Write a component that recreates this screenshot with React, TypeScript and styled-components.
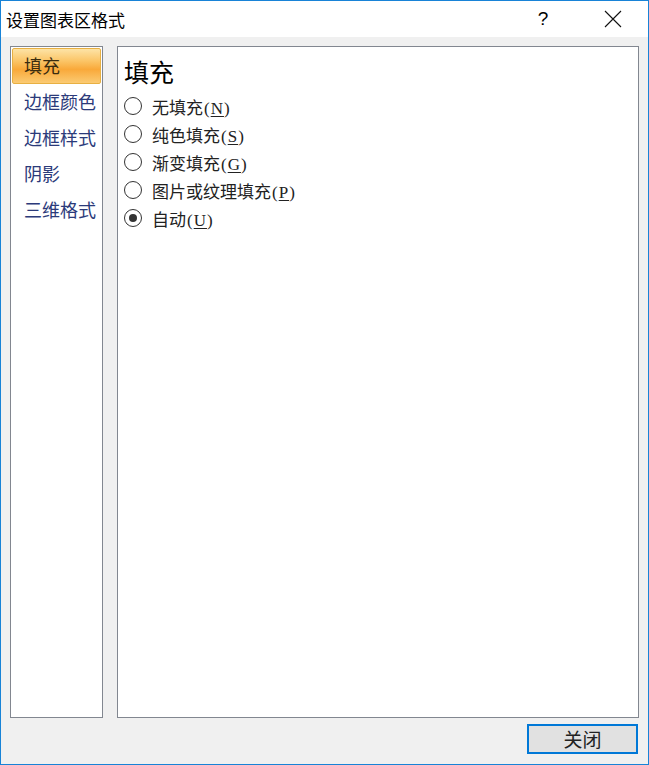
import React, { useState } from 'react';
import styled, { createGlobalStyle } from 'styled-components';

const GlobalStyle = createGlobalStyle`
  html, body {
    margin: 0;
    padding: 0;
    background: #f0f0f0;
  }
  body {
    font-family: "Noto Sans CJK SC", sans-serif;
  }
`;

const Window = styled.div`
  width: 649px;
  height: 765px;
  box-sizing: border-box;
  border: 1px solid #1883d7;
  display: flex;
  flex-direction: column;
  background: #f0f0f0;
`;

const TitleBar = styled.div`
  height: 36px;
  background: #fff;
  display: flex;
  align-items: center;
  padding-left: 5px;
  flex: 0 0 auto;
`;

const TitleText = styled.div`
  flex: 1;
  font-size: 17px;
  color: #000;
  font-family: "Noto Sans CJK SC", sans-serif;
`;

const TitleButton = styled.div`
  width: 70px;
  height: 36px;
  display: flex;
  align-items: center;
  justify-content: center;
  color: #000;
  font-family: "Liberation Sans", sans-serif;
  font-size: 19px;
  font-weight: 300;
`;

const Body = styled.div`
  flex: 1;
  display: flex;
  flex-direction: column;
  padding: 9px 9px 0 9px;
`;

const Panels = styled.div`
  display: flex;
  gap: 14px;
  height: 672px;
`;

const Nav = styled.div`
  width: 93px;
  box-sizing: border-box;
  border: 1px solid #828790;
  background: #fff;
  padding: 1px;
  display: flex;
  flex-direction: column;
`;

const NavItem = styled.div<{ $active?: boolean }>`
  height: 36px;
  box-sizing: border-box;
  display: flex;
  align-items: center;
  padding-left: 11px;
  padding-bottom: 2px;
  font-size: 18px;
  font-family: "Noto Sans CJK SC", sans-serif;
  color: ${p => (p.$active ? '#3a2c10' : '#2b3a7a')};
  border-radius: 2px;
  border: 1px solid ${p => (p.$active ? '#e8b042' : 'transparent')};
  background: ${p =>
    p.$active
      ? 'linear-gradient(to bottom, #fde3a6 0%, #fbc567 35%, #f9a93a 60%, #fbcb73 100%)'
      : 'transparent'};
  cursor: default;
`;

const Content = styled.div`
  flex: 1;
  box-sizing: border-box;
  border: 1px solid #828790;
  background: #fff;
  padding: 6px 0 0 6px;
`;

const Heading = styled.div`
  font-size: 25px;
  font-family: "Noto Sans CJK SC", sans-serif;
  color: #000;
  line-height: 36px;
  margin-bottom: 3px;
`;

const RadioList = styled.div`
  display: flex;
  flex-direction: column;
`;

const RadioRow = styled.label`
  height: 28px;
  display: flex;
  align-items: center;
  gap: 10px;
  font-size: 17px;
  font-family: "Liberation Serif", "Noto Sans CJK SC", serif;
  color: #222;
  cursor: default;
`;

const RadioCircle = styled.span<{ $checked?: boolean }>`
  width: 18px;
  height: 18px;
  box-sizing: border-box;
  border: 1px solid #333;
  border-radius: 50%;
  background: #fff;
  display: flex;
  align-items: center;
  justify-content: center;
  &::after {
    content: '';
    width: 8px;
    height: 8px;
    border-radius: 50%;
    background: ${p => (p.$checked ? '#333' : 'transparent')};
  }
`;

const Paren = styled.span`
  margin-left: 1px;
  letter-spacing: 1px;
`;

const Key = styled.span`
  text-decoration: underline;
  text-underline-offset: 2px;
`;

const Footer = styled.div`
  display: flex;
  justify-content: flex-end;
  padding-top: 6px;
  padding-right: 1px;
`;

const CloseButton = styled.button`
  width: 111px;
  height: 30px;
  box-sizing: border-box;
  border: 2px solid #0078d7;
  background: #e1e1e1;
  font-size: 19px;
  line-height: 24px;
  font-family: "Noto Sans CJK SC", sans-serif;
  color: #222;
  padding: 0;
  cursor: default;
`;

const navItems = ['填充', '边框颜色', '边框样式', '阴影', '三维格式'];

const options = [
  { label: '无填充', key: 'N' },
  { label: '纯色填充', key: 'S' },
  { label: '渐变填充', key: 'G' },
  { label: '图片或纹理填充', key: 'P' },
  { label: '自动', key: 'U' },
];

const App: React.FC = () => {
  const [nav, setNav] = useState(0);
  const [fill, setFill] = useState('U');
  return (
    <>
      <GlobalStyle />
      <Window>
        <TitleBar>
          <TitleText>设置图表区格式</TitleText>
          <TitleButton>?</TitleButton>
          <TitleButton>
            <svg width="18" height="18" viewBox="0 0 18 18">
              <path d="M1 1L17 17M17 1L1 17" stroke="#111" strokeWidth="1.1" fill="none" />
            </svg>
          </TitleButton>
        </TitleBar>
        <Body>
          <Panels>
            <Nav>
              {navItems.map((n, i) => (
                <NavItem key={n} $active={i === nav} onClick={() => setNav(i)}>
                  {n}
                </NavItem>
              ))}
            </Nav>
            <Content>
              <Heading>填充</Heading>
              <RadioList>
                {options.map(o => (
                  <RadioRow key={o.key} onClick={() => setFill(o.key)}>
                    <RadioCircle $checked={fill === o.key} />
                    <span>
                      {o.label}
                      <Paren>
                        (<Key>{o.key}</Key>)
                      </Paren>
                    </span>
                  </RadioRow>
                ))}
              </RadioList>
            </Content>
          </Panels>
          <Footer>
            <CloseButton>关闭</CloseButton>
          </Footer>
        </Body>
      </Window>
    </>
  );
};

export default App;
